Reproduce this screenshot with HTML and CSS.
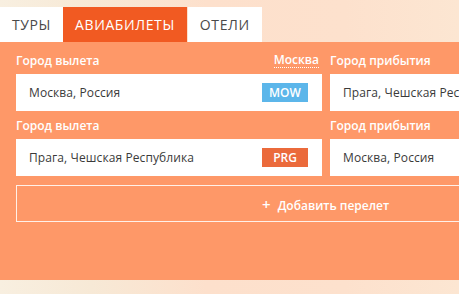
FILE: index.html
```html
<!DOCTYPE html>
<html lang="ru">
<head>
    <meta charset="UTF-8">
    <meta name="viewport" content="width=device-width, initial-scale=1.0">
    <title>Поиск авиабилетов</title>
    <link rel="stylesheet" href="styles.css">
</head>
<body>
    <!-- Tabs -->
    <nav class="tabs">
        <a href="#" class="tab">Туры</a>
        <a href="#" class="tab active">Авиабилеты</a>
        <a href="#" class="tab">Отели</a>
    </nav>

    <!-- Search form -->
    <section class="panel">
        <div class="row">
            <div class="field">
                <div class="field-label">
                    <span>Город вылета</span>
                    <a href="#" class="city-link">Москва</a>
                </div>
                <div class="field-input">
                    <span>Москва, Россия</span>
                    <span class="code code-blue">MOW</span>
                </div>
            </div>
            <div class="field">
                <div class="field-label">
                    <span>Город прибытия</span>
                </div>
                <div class="field-input">
                    <span>Прага, Чешская Республика</span>
                    <span class="code code-orange">PRG</span>
                </div>
            </div>
        </div>

        <div class="row">
            <div class="field">
                <div class="field-label">
                    <span>Город вылета</span>
                </div>
                <div class="field-input">
                    <span>Прага, Чешская Республика</span>
                    <span class="code code-orange">PRG</span>
                </div>
            </div>
            <div class="field">
                <div class="field-label">
                    <span>Город прибытия</span>
                </div>
                <div class="field-input">
                    <span>Москва, Россия</span>
                    <span class="code code-blue">MOW</span>
                </div>
            </div>
        </div>

        <button type="button" class="add-flight"><span class="plus">+</span> Добавить перелет</button>
    </section>
</body>
</html>
```

FILE: styles.css
```css
/* General Styles */
* {
    margin: 0;
    padding: 0;
    box-sizing: border-box;
}

html, body {
    overflow: hidden;
}

body {
    width: 459px;
    height: 294px;
    font-family: "Open Sans", Arial, sans-serif;
    background: linear-gradient(90deg, #f8efe0 0%, #f7e9d6 20%, #fde0cc 45%, #fde1cd 75%, #fce6d2 100%);
}

/* Tabs */
.tabs {
    display: flex;
    padding-top: 7px;
}

.tab {
    display: block;
    height: 35px;
    line-height: 35px;
    padding: 0 12px;
    font-size: 14px;
    letter-spacing: 0.6px;
    text-transform: uppercase;
    text-decoration: none;
    color: #4a4a4a;
    background: #fff;
}

.tab.active {
    background: #f15a22;
    color: #fff;
    margin-right: 1px;
}

/* Orange panel */
.panel {
    width: 680px;
    padding: 4px 0 58px 16px;
    background: #fe9868;
}

.row {
    display: grid;
    grid-template-columns: 306px 306px;
    gap: 8px;
}

.field-label {
    display: flex;
    justify-content: space-between;
    align-items: center;
    height: 28px;
    font-size: 12px;
    font-weight: 600;
    color: #fff;
}

.city-link {
    color: #fff;
    text-decoration: none;
    border-bottom: 1px dotted #fff;
    line-height: 14px;
    margin-right: 3px;
}

.field-input {
    display: flex;
    justify-content: space-between;
    align-items: center;
    height: 37px;
    padding: 0 14px 0 13px;
    background: #fff;
    font-size: 12px;
    letter-spacing: 0.1px;
    color: #3a3a3a;
    white-space: nowrap;
}

.code {
    width: 46px;
    height: 19px;
    line-height: 19px;
    text-align: center;
    font-size: 12px;
    font-weight: 600;
    letter-spacing: 0;
    color: #fff;
}

.code-blue {
    background: #5cb6ea;
}

.code-orange {
    background: #eb6a3b;
}

/* Add flight button */
.add-flight {
    display: block;
    width: 619px;
    height: 37px;
    margin-top: 9px;
    background: none;
    border: 1px solid rgba(255, 255, 255, 0.85);
    font-family: "Open Sans", Arial, sans-serif;
    font-size: 12px;
    font-weight: 600;
    color: #fff;
    cursor: pointer;
}

.plus {
    font-size: 15px;
    margin-right: 4px;
}
```
